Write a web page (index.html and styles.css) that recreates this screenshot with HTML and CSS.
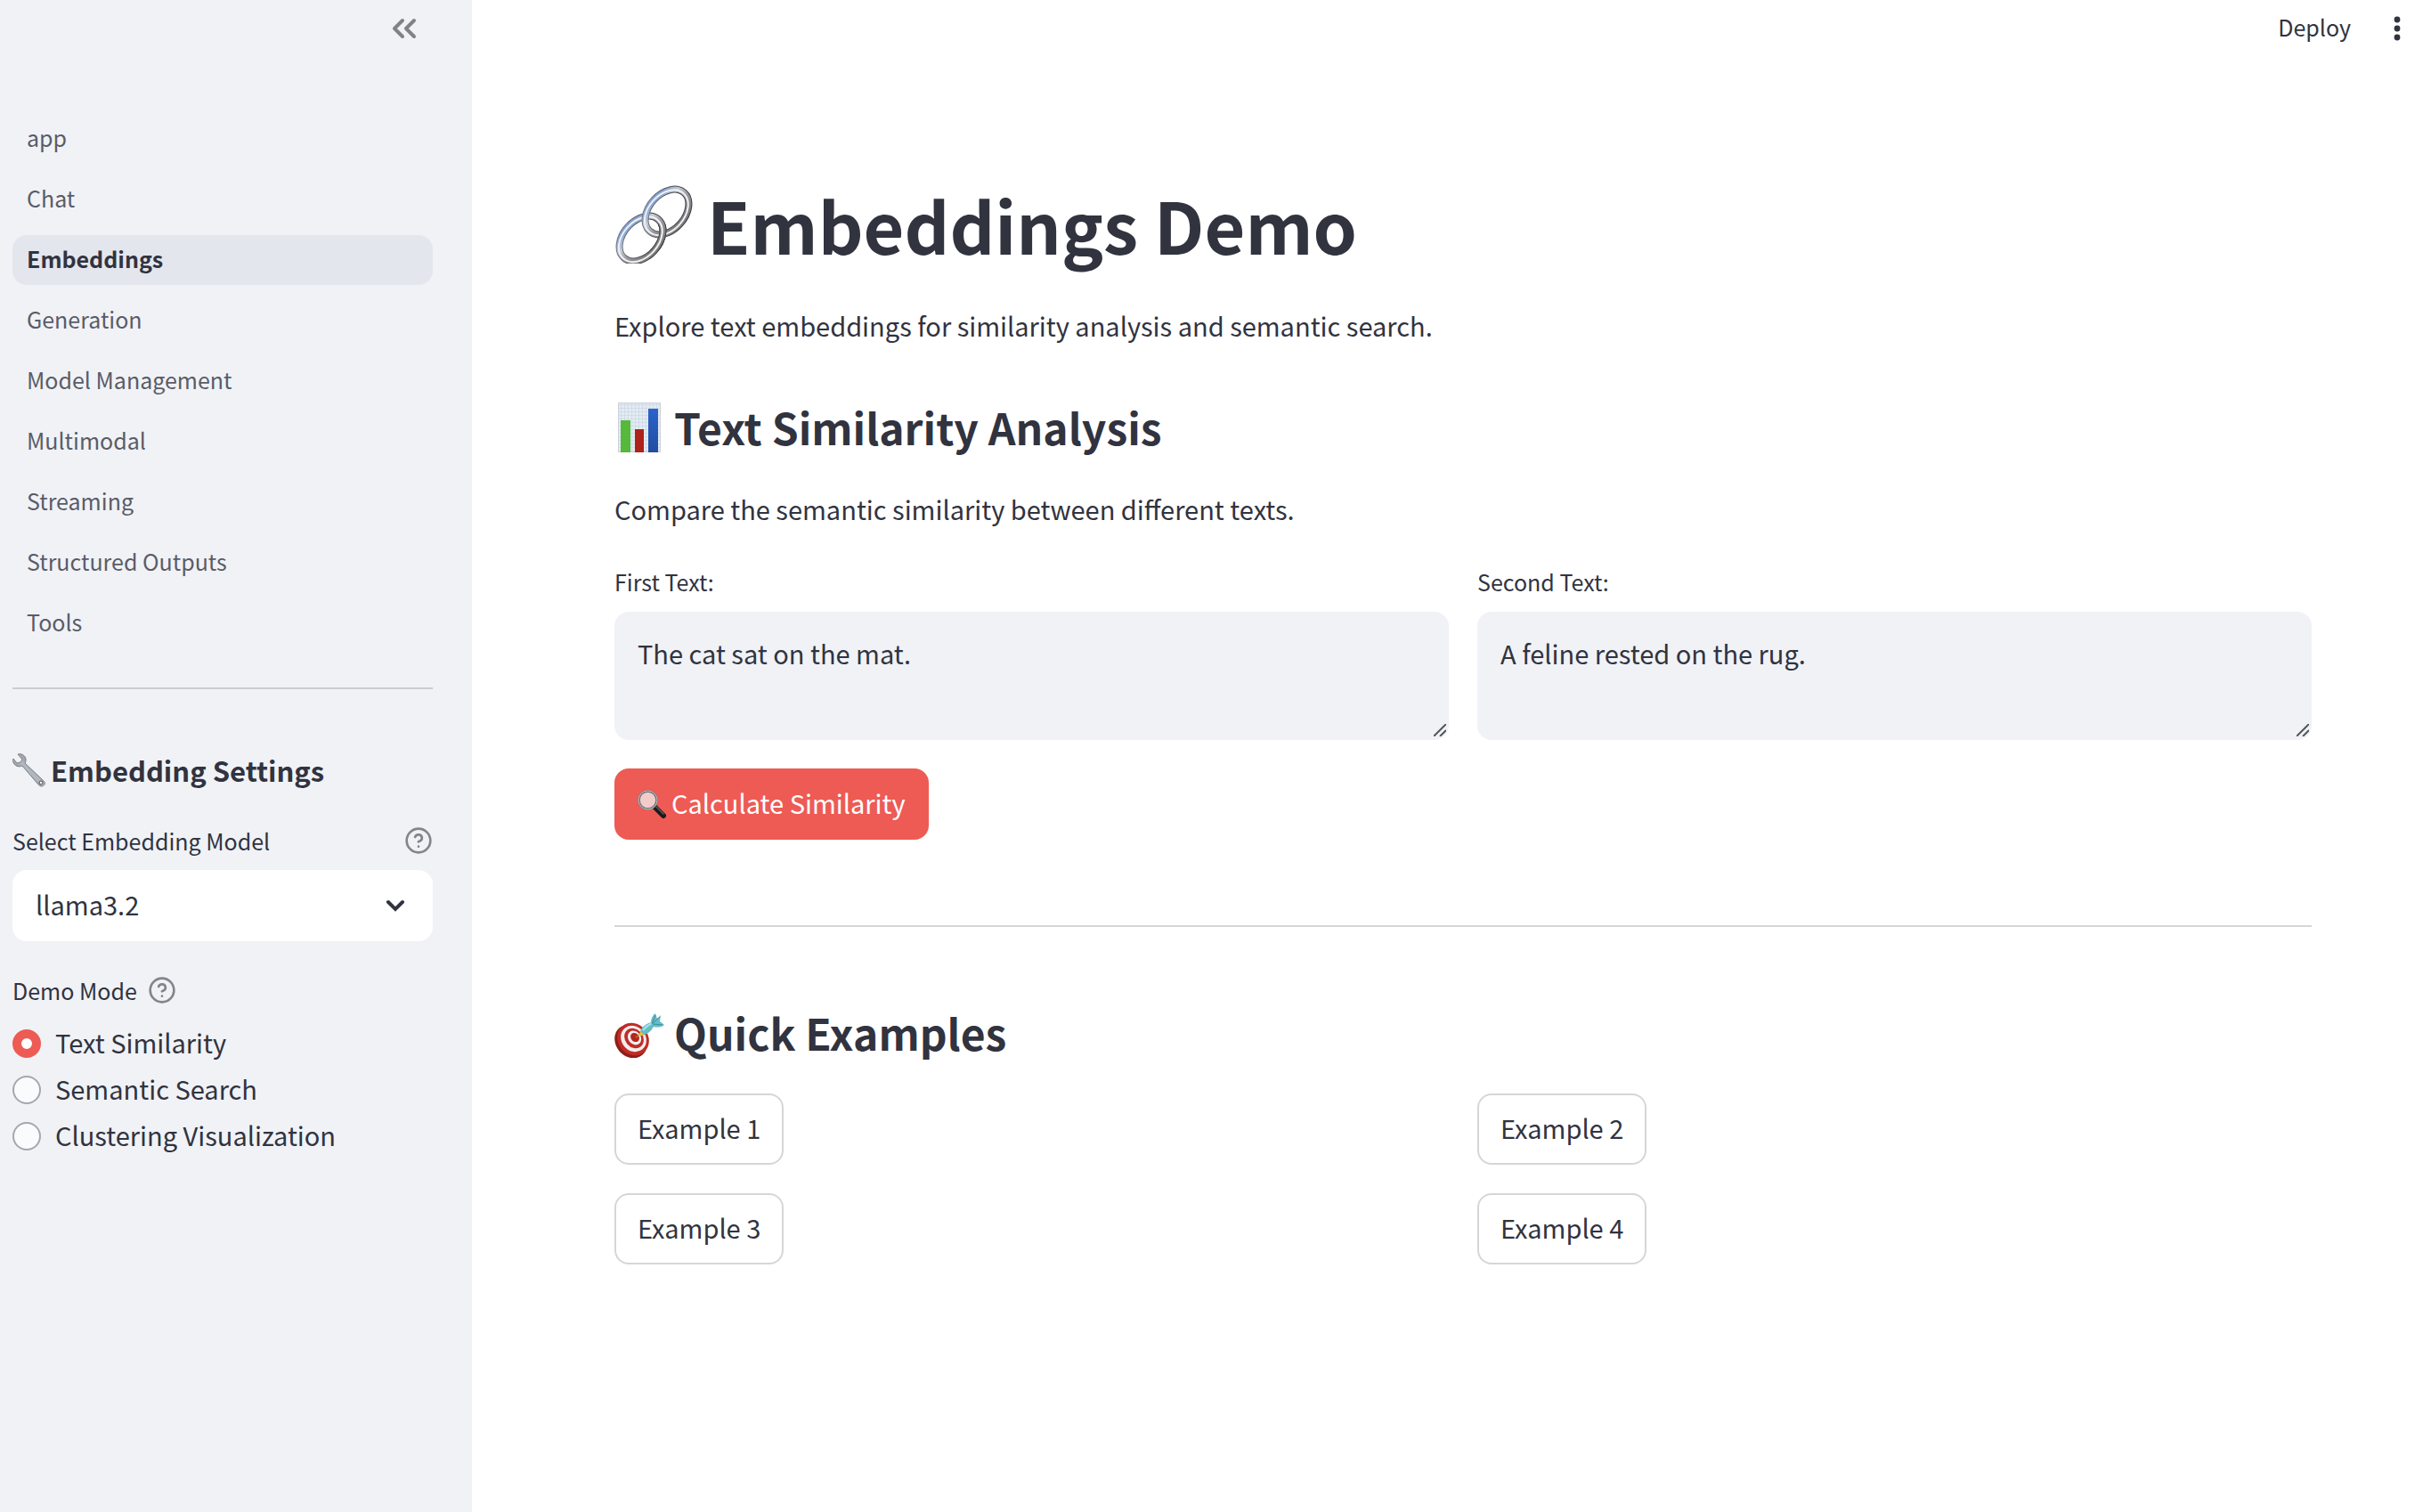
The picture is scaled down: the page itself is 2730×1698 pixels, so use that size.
FILE: index.html
```html
<!DOCTYPE html>
<html lang="en">
<head>
<meta charset="utf-8">
<meta name="viewport" content="width=device-width, initial-scale=1">
<title>Embeddings Demo</title>
<link rel="stylesheet" href="styles.css">
</head>
<body>
<div class="app">
  <aside class="sidebar">
    <div class="sidebar-header">
      <button class="icon-button" type="button" aria-label="Collapse sidebar">
        <svg width="30" height="26" viewBox="0 0 30 26" fill="none" stroke="#808288" stroke-width="4" stroke-linecap="round" stroke-linejoin="round"><path d="M13 4 4 13l9 9M26 4l-9 9 9 9"/></svg>
      </button>
    </div>
    <nav class="nav">
      <a class="nav-link" href="#app">app</a>
      <a class="nav-link" href="#chat">Chat</a>
      <a class="nav-link active" href="#embeddings" aria-current="page">Embeddings</a>
      <a class="nav-link" href="#generation">Generation</a>
      <a class="nav-link" href="#models">Model Management</a>
      <a class="nav-link" href="#multimodal">Multimodal</a>
      <a class="nav-link" href="#streaming">Streaming</a>
      <a class="nav-link" href="#structured">Structured Outputs</a>
      <a class="nav-link" href="#tools">Tools</a>
    </nav>
    <hr class="sidebar-rule">
    <h3 class="settings-title">
      <svg width="37" height="38" viewBox="0 0 37 38" aria-hidden="true">
        <defs><linearGradient id="steel" x1="0" y1="1" x2="1" y2="0"><stop offset="0" stop-color="#5e6064"/><stop offset=".5" stop-color="#b4bac1"/><stop offset="1" stop-color="#66585c"/></linearGradient></defs>
        <path d="M6 1c4-1 8 1 9 5 0 2 0 4-1 5l21 20c2 2 2 4 0 5-2 2-4 1-6-1L11 14c-4 2-9 0-10-4-1-2-1-3 0-4l4 5 4-1 2-3Z" fill="url(#steel)" stroke="#7b8087" stroke-width="1"/>
        <circle cx="32" cy="33" r="2" fill="#f0f2f6" stroke="#55474a"/>
      </svg>
      <span>Embedding Settings</span>
    </h3>
    <div class="label-row spread">
      <label for="model">Select Embedding Model</label>
      <svg class="help" viewBox="0 0 24 24"><circle cx="12" cy="12" r="10"/><path d="M9.09 9a3 3 0 0 1 5.83 1c0 2-3 3-3 3M12 17h.01"/></svg>
    </div>
    <div class="select-box">
      <select id="model"><option>llama3.2</option></select>
      <svg class="chevron" width="22" height="14" viewBox="0 0 22 14" fill="none" stroke="#31333f" stroke-width="4" stroke-linecap="round"><path d="m3 3 8 8 8-8"/></svg>
    </div>
    <fieldset class="modes">
      <legend class="label-row">
        <span>Demo Mode</span>
        <svg class="help" viewBox="0 0 24 24"><circle cx="12" cy="12" r="10"/><path d="M9.09 9a3 3 0 0 1 5.83 1c0 2-3 3-3 3M12 17h.01"/></svg>
      </legend>
      <label class="mode"><input type="radio" name="mode" checked><span>Text Similarity</span></label>
      <label class="mode"><input type="radio" name="mode"><span>Semantic Search</span></label>
      <label class="mode"><input type="radio" name="mode"><span>Clustering Visualization</span></label>
    </fieldset>
  </aside>

  <div class="page">
    <header class="toolbar">
      <button class="deploy" type="button">Deploy</button>
      <button class="icon-button" type="button" aria-label="Main menu">
        <svg width="8" height="28" viewBox="0 0 8 28" fill="#31333f"><circle cx="4" cy="4" r="3.4"/><circle cx="4" cy="14" r="3.4"/><circle cx="4" cy="24" r="3.4"/></svg>
      </button>
    </header>
    <main class="content">
      <h1 class="title">
        <svg width="88" height="88" viewBox="0 0 88 88" fill="none" aria-hidden="true">
          <defs>
            <linearGradient id="chrome" x1="0" y1="0" x2="0" y2="1"><stop offset="0" stop-color="#84a3d2"/><stop offset=".3" stop-color="#c5cbd4"/><stop offset=".6" stop-color="#98969b"/><stop offset="1" stop-color="#7d7a7c"/></linearGradient>
            <linearGradient id="edge" x1="0" y1="0" x2="1" y2="1"><stop offset="0" stop-color="#77808f"/><stop offset=".6" stop-color="#4c4648"/><stop offset="1" stop-color="#3a3535"/></linearGradient>
            <clipPath id="front"><path d="M40 44h30v40H40z"/></clipPath>
            <g id="ring">
              <ellipse rx="29" ry="20" transform="rotate(-48)" stroke="url(#edge)" stroke-width="8"/>
              <ellipse rx="29" ry="20" transform="rotate(-48)" stroke="url(#chrome)" stroke-width="6"/>
              <ellipse cx="-1" rx="29" ry="20" transform="rotate(-48)" stroke="#eef2f7" stroke-width="2"/>
            </g>
          </defs>
          <use href="#ring" x="30" y="60"/>
          <use href="#ring" x="59" y="30"/>
          <g clip-path="url(#front)"><use href="#ring" x="30" y="60"/></g>
        </svg>
        <span>Embeddings Demo</span>
      </h1>
      <p class="text intro">Explore text embeddings for similarity analysis and semantic search.</p>

      <h2 class="section-title">
        <svg width="56" height="58" viewBox="0 0 56 58" aria-hidden="true">
          <defs>
            <pattern id="grid" width="4" height="4" patternUnits="userSpaceOnUse"><path d="M0 0h4v4" fill="none" stroke="#c3d0df" stroke-width="1"/></pattern>
            <linearGradient id="blue" x2="0" y2="1"><stop stop-color="#2a63cc"/><stop offset="1" stop-color="#214da0"/></linearGradient>
          </defs>
          <path d="M4 2h48v56H4z" fill="#e3ebf3"/><path d="M4 2h48v56H4z" fill="url(#grid)"/><path d="M4.500 2.500h47v55h-47z" fill="none" stroke="#cdd2d8"/>
          <path d="M7 22h11v36H7z" fill="#55b93c"/><path d="M23 32h10v26H23z" fill="#ad2219"/><path d="M38 9h11v49H38z" fill="url(#blue)"/>
        </svg>
        <span>Text Similarity Analysis</span>
      </h2>
      <p class="text compare">Compare the semantic similarity between different texts.</p>

      <div class="columns">
        <div class="field">
          <label for="first">First Text:</label>
          <div class="textarea-box">
            <textarea id="first">The cat sat on the mat.</textarea>
            <svg class="grip" width="14" height="14" viewBox="0 0 14 14" stroke="#55565c" stroke-width="2"><path d="M0 14 14 0M7 14l7-7"/></svg>
          </div>
        </div>
        <div class="field">
          <label for="second">Second Text:</label>
          <div class="textarea-box">
            <textarea id="second">A feline rested on the rug.</textarea>
            <svg class="grip" width="14" height="14" viewBox="0 0 14 14" stroke="#55565c" stroke-width="2"><path d="M0 14 14 0M7 14l7-7"/></svg>
          </div>
        </div>
      </div>

      <button class="button primary" type="button">
        <svg width="32" height="32" viewBox="0 0 32 32" aria-hidden="true">
          <path d="m20 20 9 9" stroke="#1b1b1d" stroke-width="6" stroke-linecap="round"/>
          <path d="m21 19 8 8" stroke="#5d5e62" stroke-width="1.500" stroke-linecap="round"/>
          <circle cx="11.500" cy="11.500" r="10" fill="#f1cccb" stroke="#6f6d70" stroke-width="2.500"/>
          <circle cx="11.500" cy="11.500" r="10.500" fill="none" stroke="#c9c5c8" stroke-width="1"/>
        </svg>
        <span>Calculate Similarity</span>
      </button>

      <hr class="content-rule">

      <h2 class="section-title">
        <svg width="56" height="58" viewBox="0 0 56 58" aria-hidden="true">
          <ellipse cx="18.500" cy="39.500" rx="17" ry="20" transform="rotate(-40 18.500 39.500)" fill="#8e1d18"/>
          <ellipse cx="21" cy="37" rx="17" ry="19" transform="rotate(-40 21 37)" fill="#c02c26"/>
          <ellipse cx="21.500" cy="36.500" rx="13.500" ry="15.500" transform="rotate(-40 21.500 36.500)" fill="#f3eeee"/>
          <ellipse cx="22" cy="36" rx="10" ry="12" transform="rotate(-40 22 36)" fill="#c02c26"/>
          <ellipse cx="22.500" cy="35.500" rx="7" ry="8.500" transform="rotate(-40 22.500 35.500)" fill="#f3eeee"/>
          <ellipse cx="23" cy="35" rx="4.500" ry="5.500" transform="rotate(-40 23 35)" fill="#b42620"/>
          <path d="m24 35 7-5" stroke="#b98a24" stroke-width="1.500"/>
          <path d="m27 33 3-6 4 6Z" fill="#e6c22f"/>
          <path d="M29 28c2-5 6-8 12-10 0-4 2-8 5-10l2 6 4-4-1 7 5 4c-4 3-8 3-12 2-3 5-6 8-11 9Z" fill="#66bcc7"/>
          <path d="M32 27c3-4 6-6 10-8" stroke="#a7e4ea" stroke-width="2" fill="none"/>
          <path d="m42 20 4-10m-3 10 11 1m-11-2 8-7" stroke="#3d8e9c" stroke-width="1" fill="none"/>
        </svg>
        <span>Quick Examples</span>
      </h2>
      <div class="columns examples">
        <button class="button" type="button"><span>Example 1</span></button>
        <button class="button" type="button"><span>Example 2</span></button>
        <button class="button" type="button"><span>Example 3</span></button>
        <button class="button" type="button"><span>Example 4</span></button>
      </div>
    </main>
  </div>
</div>
</body>
</html>
```
FILE: styles.css
```css
* { box-sizing: border-box; }

body {
  margin: 0;
  background: #fff;
  color: #31333f;
  font-family: "Noto Sans CJK SC", "Noto Sans", sans-serif;
  font-size: 29px;
  line-height: 52px;
}

button, select, textarea { font: inherit; color: inherit; }
h1, h2, h3, p, hr, fieldset, legend { margin: 0; padding: 0; border: 0; }
svg { flex: none; display: block; }

.app { display: flex; min-height: 100vh; }

/* Sidebar */
.sidebar {
  flex: 0 0 530px;
  padding: 0 44px 44px 14px;
  background: #f0f2f6;
}
.sidebar-header {
  display: flex;
  justify-content: flex-end;
  height: 128px;
  padding: 19px 17px 0 0;
}
.icon-button {
  display: block;
  align-self: flex-start;
  padding: 0;
  border: 0;
  background: none;
  cursor: pointer;
}
.nav { display: flex; flex-direction: column; gap: 12px; }
.nav-link {
  padding: 0 16px 4px;
  border-radius: 16px;
  color: #5a5c67;
  font-size: 25px;
  text-decoration: none;
}
.nav-link.active { background: #e4e6ee; color: #31333f; font-weight: 700; }
.sidebar-rule { height: 2px; margin: 44px 0 67px; background: #cbccd2; }
.settings-title {
  display: flex;
  align-items: center;
  gap: 6px;
  margin-bottom: 35px;
  font-size: 31px;
  line-height: 48px;
  font-weight: 700;
}
.label-row {
  display: flex;
  align-items: center;
  gap: 12px;
  font-size: 25px;
  line-height: 40px;
}
.spread { justify-content: space-between; }
.help {
  width: 32px;
  height: 32px;
  fill: none;
  stroke: #83858c;
  stroke-width: 2;
  stroke-linecap: round;
  stroke-linejoin: round;
}
.select-box { position: relative; margin: 13px 0 35px; }
.select-box select {
  display: block;
  width: 100%;
  height: 80px;
  padding: 0 64px 4px 26px;
  border: 0;
  border-radius: 16px;
  background: #fff;
  appearance: none;
}
.chevron { position: absolute; right: 31px; top: 33px; pointer-events: none; }
.modes .label-row { margin-bottom: 14px; }
.mode { display: flex; align-items: center; gap: 16px; }
.mode span { padding-bottom: 4px; line-height: 48px; }
.mode input {
  flex: none;
  width: 32px;
  height: 32px;
  margin: 0;
  border: 2px solid #a5a7ae;
  border-radius: 50%;
  background: #fafbfc;
  appearance: none;
}
.mode input:checked { border: 10px solid #ed5b54; background: #fff; }

/* Main page */
.page { flex: 1; min-width: 0; }
.toolbar {
  display: flex;
  justify-content: flex-end;
  gap: 48px;
  height: 120px;
  padding: 18px 34px 0 0;
}
.deploy {
  align-self: flex-start;
  margin-top: -8px;
  padding: 0;
  border: 0;
  background: none;
  font-size: 25px;
  line-height: 40px;
}
.content { padding: 84px 134px 160px 160px; }
.title {
  display: flex;
  align-items: center;
  gap: 16px;
  font-size: 79px;
  line-height: 96px;
  font-weight: 700;
}
.intro { margin: 39px 0 58px; }
.section-title {
  display: flex;
  align-items: center;
  gap: 11px;
  font-size: 48px;
  line-height: 60px;
  font-weight: 700;
}
.compare { margin: 36px 0; }
.columns {
  display: grid;
  grid-template-columns: 1fr 1fr;
  gap: 32px;
}
.field label { display: block; margin-bottom: 14px; font-size: 25px; line-height: 40px; }
.textarea-box { position: relative; }
.textarea-box textarea {
  display: block;
  width: 100%;
  height: 144px;
  padding: 20px 26px;
  border: 0;
  border-radius: 16px;
  background: #f0f2f6;
  resize: none;
}
.grip { position: absolute; right: 3px; bottom: 4px; pointer-events: none; }
.button {
  display: flex;
  align-items: center;
  justify-self: start;
  gap: 6px;
  height: 80px;
  padding: 0 24px;
  border: 2px solid #d6d6d9;
  border-radius: 16px;
  background: #fff;
  cursor: pointer;
}
.button span { padding-bottom: 4px; }
.button.primary { margin-top: 32px; border-color: #ed5b54; background: #ed5b54; color: #fff; }
.content-rule { height: 2px; margin: 96px 0 88px; background: #d6d6d9; }
.examples { margin-top: 39px; }
```
